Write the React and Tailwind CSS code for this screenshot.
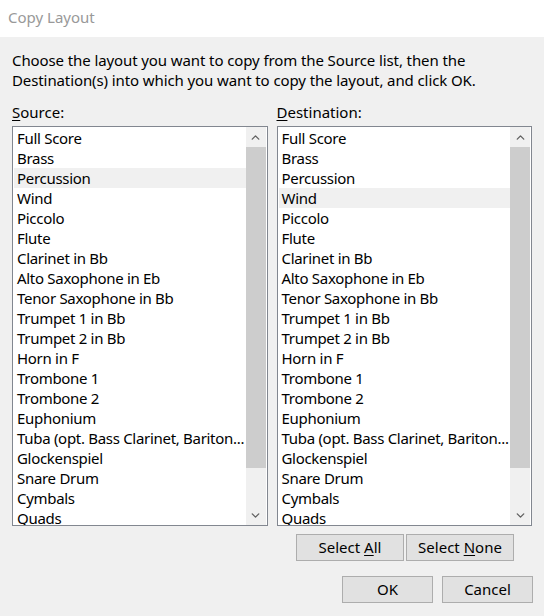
import { ChevronUp, ChevronDown } from 'lucide-react';

const parts = [
  'Full Score', 'Brass', 'Percussion', 'Wind', 'Piccolo', 'Flute', 'Clarinet in Bb',
  'Alto Saxophone in Eb', 'Tenor Saxophone in Bb', 'Trumpet 1 in Bb', 'Trumpet 2 in Bb',
  'Horn in F', 'Trombone 1', 'Trombone 2', 'Euphonium', 'Tuba (opt. Bass Clarinet, Bariton...',
  'Glockenspiel', 'Snare Drum', 'Cymbals', 'Quads',
];

function PartList({ label, hot }) {
  return (
    <div className="flex flex-col w-[256px]">
      <div className="h-[20px] leading-[20px] mb-[4px]">
        <span className="underline underline-offset-2">{label[0]}</span>{label.slice(1)}
      </div>
      <div className="flex h-[400px] border border-[#828790] bg-white">
        <div className="flex-1 overflow-hidden pt-[1px] pl-[1px]">
          {parts.map(p => (
            <div key={p} className={`h-[20px] leading-[20px] pl-[3px] tracking-[-0.3px] whitespace-nowrap overflow-hidden ${p === hot ? 'bg-[#f0f0f0]' : ''}`}>
              {p}
            </div>
          ))}
        </div>
        {/* scrollbar */}
        <div className="w-[20px] mr-[1px] flex flex-col bg-[#f0f0f0]">
          <div className="h-[20px] flex items-center justify-center text-[#606060]">
            <ChevronUp size={13} strokeWidth={2.5} />
          </div>
          <div className="h-[321px] bg-[#cdcdcd]" />
          <div className="flex-1" />
          <div className="h-[20px] flex items-center justify-center text-[#606060]">
            <ChevronDown size={13} strokeWidth={2.5} />
          </div>
        </div>
      </div>
    </div>
  );
}

function Btn({ children, w }) {
  return (
    <button className={`${w} h-[27px] bg-[#e1e1e1] border border-[#adadad] text-black leading-[25px]`}>
      {children}
    </button>
  );
}

export default function App() {
  return (
    <div className="w-[544px] h-[616px] bg-[#f0f0f0] text-black text-[15px] flex flex-col" style={{ fontFamily: '"Segoe UI", "Noto Sans", sans-serif' }}>
      <div className="h-[37px] bg-white pl-[8px] pt-[7px] text-[#999999] leading-[20px]">Copy Layout</div>

      <div className="px-[12px] pt-[13px] leading-[20px] tracking-[-0.1px]">
        Choose the layout you want to copy from the Source list, then the<br />
        Destination(s) into which you want to copy the layout, and click OK.
      </div>

      <div className="flex gap-[9px] px-[12px] mt-[12px]">
        <PartList label="Source:" hot="Percussion" />
        <PartList label="Destination:" hot="Wind" />
      </div>

      <div className="flex">
        <div className="w-[277px]" />
        <div className="w-[256px] flex justify-center gap-[2px] mt-[8px]">
          <Btn w="w-[108px]">Select <span className="underline underline-offset-2">A</span>ll</Btn>
          <Btn w="w-[108px]">Select <span className="underline underline-offset-2">N</span>one</Btn>
        </div>
      </div>

      <div className="flex justify-end gap-[9px] pr-[11px] mt-[15px]">
        <Btn w="w-[91px]">OK</Btn>
        <Btn w="w-[91px]">Cancel</Btn>
      </div>
    </div>
  );
}
